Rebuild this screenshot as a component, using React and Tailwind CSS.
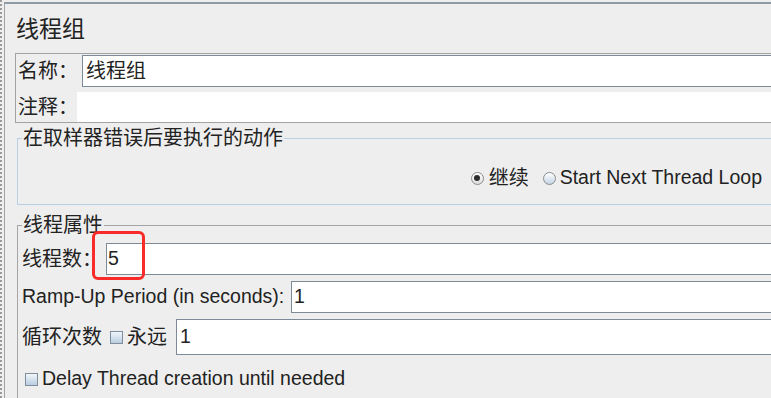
import React from 'react';

const font = "font-['Liberation_Sans','Noto_Sans_CJK_SC',sans-serif]";

const Radio = ({ checked }) => (
  <span
    className={`flex h-[13px] w-[13px] shrink-0 items-center justify-center rounded-full border border-[#8a8c8e] ${
      checked ? 'bg-linear-to-b from-[#ffffff] to-[#dcdcdc]' : 'bg-linear-to-b from-[#ffffff] to-[#c3d3e4]'
    }`}
  >
    {checked && <span className="h-[6px] w-[6px] rounded-full bg-[#2b2b2b]" />}
  </span>
);

const Check = () => (
  <span className="h-[13px] w-[13px] shrink-0 border border-[#7f8e9d] bg-linear-to-b from-[#f2f6fa] to-[#b9cde0]" />
);

const Field = ({ value, pad = 'pl-[2px]' }) => (
  <div className={`flex h-full min-w-0 flex-1 items-center border-y border-l border-[#7d8b98] bg-white ${pad}`}>
    {value}
  </div>
);

export default function App() {
  return (
    <div className={`relative h-[398px] w-[771px] overflow-hidden bg-[#eeeeee] text-[#222] ${font}`}>
      <div className="flex h-full">
        <div className="w-[4px] shrink-0 border-l-2 border-dotted border-[#9a9a9a]" />
        <div className="mt-[2px] flex min-w-0 flex-1 flex-col border-l border-t-2 border-l-[#a3a3a3] border-t-[#8d9ba6]">
          {/* title */}
          <div className="flex h-[49px] items-center pl-[11px] pt-[2px] text-[23px] leading-[23px]">线程组</div>

          {/* name / comment */}
          <div className="ml-[10px] border-y border-l border-[#a3a3a3]">
            <div className="mt-[1px] flex h-[32px] items-center text-[20px] leading-[20px]">
              <span className="w-[66px] shrink-0 whitespace-nowrap pl-[2px]">名称：</span>
              <Field value="线程组" pad="pl-[3px]" />
            </div>
            <div className="mt-[5px] flex h-[30px] items-center text-[20px] leading-[20px]">
              <span className="w-[61px] shrink-0 whitespace-nowrap pl-[2px]">注释：</span>
              <div className="h-full flex-1 bg-white" />
            </div>
          </div>

          {/* on sampler error */}
          <fieldset className="ml-[12px] mt-[5px] min-w-0 border-y border-l border-[#b8cfe5]">
            <legend className="ml-[4px] px-[1px] text-[20px] leading-[20px]">在取样器错误后要执行的动作</legend>
            <div className="flex h-[56px] items-center justify-end pr-[9px] pt-[4px] leading-none">
              <Radio checked />
              <span className="ml-[5px] text-[20px]">继续</span>
              <span className="ml-[14px]">
                <Radio />
              </span>
              <span className="ml-[4px] whitespace-nowrap text-[19.5px]">Start Next Thread Loop</span>
            </div>
          </fieldset>

          {/* thread properties */}
          <fieldset className="ml-[12px] mt-[10px] min-w-0 flex-1 border-t border-l border-[#a5a5a5]">
            <legend className="ml-[4px] px-[1px] text-[20px] leading-[20px]">线程属性</legend>
            <div className="mt-[8px] flex h-[32px] items-center leading-none">
              <span className="w-[88px] shrink-0 whitespace-nowrap pl-[4px] text-[20px]">线程数：</span>
              <Field value={<span className="text-[19.5px]">5</span>} pad="pl-[1px]" />
            </div>
            <div className="mt-[6px] flex h-[32px] items-center leading-none">
              <span className="w-[273px] shrink-0 whitespace-nowrap pl-[4px] text-[19.5px]">Ramp-Up Period (in seconds):</span>
              <Field value={<span className="text-[19.5px]">1</span>} />
            </div>
            <div className="mt-[6px] flex h-[36px] items-center leading-none">
              <span className="w-[92px] shrink-0 whitespace-nowrap pl-[4px] text-[20px]">循环次数</span>
              <Check />
              <span className="ml-[4px] w-[49px] shrink-0 whitespace-nowrap text-[20px]">永远</span>
              <Field value={<span className="text-[19.5px]">1</span>} pad="pl-[3px]" />
            </div>
            <div className="mt-[12px] flex h-[24px] items-center pl-[7px] leading-none">
              <Check />
              <span className="ml-[4px] whitespace-nowrap text-[19.5px]">Delay Thread creation until needed</span>
            </div>
          </fieldset>
        </div>
      </div>

      {/* highlight */}
      <div className="absolute left-[92px] top-[231px] h-[49px] w-[53px] rounded-[6px] border-[3px] border-[#f82a2a]" />
    </div>
  );
}
